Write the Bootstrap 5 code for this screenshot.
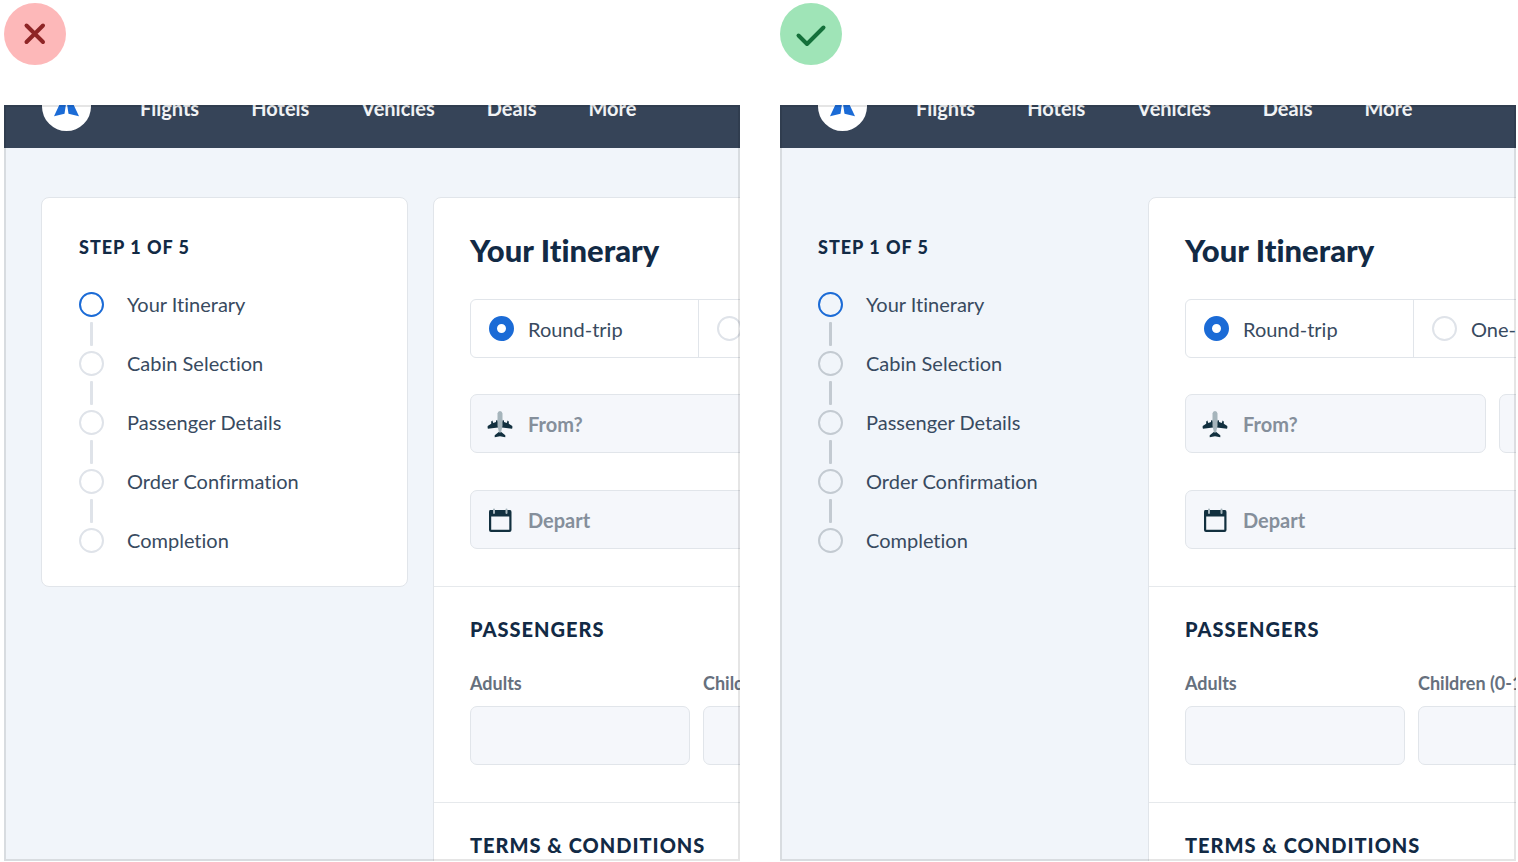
<!DOCTYPE html>
<html lang="en">
<head>
<meta charset="utf-8">
<meta name="viewport" content="width=device-width, initial-scale=1">
<title>Booking steps</title>
<link href="https://cdn.jsdelivr.net/npm/bootstrap@5.3.0/dist/css/bootstrap.min.css" rel="stylesheet">
<style>
  :root { --ink: #122a45; --ink-soft: #384a60; --line: #e1e5ea; --blue: #1b6bd6; --field: #f5f7fb; }
  body { font-family: Lato, "Open Sans", sans-serif; font-size: 20px; line-height: 24px; font-variant-ligatures: none; color: var(--ink-soft); background: #fff; }
  .compare { display: grid; grid-template-columns: 1fr 1fr; gap: 40px; height: 100vh; padding: 3px 2px 1px 4px; }
  .example { min-width: 0; min-height: 0; }
  .verdict { width: 62px; height: 62px; margin-bottom: 40px; }
  .verdict-bad { background: #fdb8b9; color: #8e2526; }
  .verdict-good { background: #9fe4b7; color: #14703a; }
  .screen { background: #f1f5fa; min-height: 0; }
  .screen::after { content: ""; position: absolute; inset: 0; border: 2px solid rgba(0, 0, 0, .1); pointer-events: none; }
  .topbar { height: 43px; padding: 0 38px 17px; background: #364458; }
  .topbar-row { gap: 49px; }
  .topbar-row ul { gap: 52px; padding-top: 2px; }
  .topbar a { color: #f1f3f5; font-weight: 700; }
  .workspace { padding: 49px 0 0 37px; }
  .steps { flex: 0 0 367px; padding: 37px 37px 33px; border: 1px solid transparent; }
  .steps-card { background: #fff; border-color: var(--line); border-radius: 8px; margin-right: 25px; --track: #dfe3e9; }
  .steps-plain { flex-basis: 331px; padding-left: 0; --track: #c3cad1; }
  .steps h2 { font-size: 18px; line-height: 24px; margin-bottom: 33px; letter-spacing: 1px; }
  .steps li { gap: 23px; }
  .marker { width: 25px; height: 25px; border: 2px solid var(--track); border-radius: 50%; }
  .marker-current { border-color: var(--blue); }
  .link-line { width: 3px; height: 24px; margin: 5px 0; background: var(--track); border-radius: 1px; }
  h1, h2 { color: var(--ink); font-weight: 900; }
  .panel { flex: 0 0 1000px; background: #fff; border: 1px solid var(--line); border-radius: 8px; }
  .panel h1 { font-size: 31px; line-height: 36px; margin-bottom: 31px; }
  .panel h2 { font-size: 20px; line-height: 26px; margin-bottom: 29px; letter-spacing: 1px; }
  .block { padding: 29px 36px 37px; border-bottom: 1px solid #e6e9ec; }
  .block-main { padding-top: 34px; }
  .choices { height: 59px; border: 1px solid var(--line); border-radius: 6px; margin-bottom: 36px; }
  .choices label { flex: 0 0 227px; gap: 14px; padding-left: 18px; }
  .choices label + label { border-left: 1px solid var(--line); }
  .choices input { appearance: none; width: 25px; height: 25px; margin: 0; border: 2px solid #dfe3e9; border-radius: 50%; background: #fff; }
  .choices input:checked { border: 8px solid var(--blue); }
  .field { height: 59px; background: var(--field); border: 1px solid var(--line); border-radius: 7px; }
  .field-icon { gap: 15px; padding-left: 16px; }
  .field-icon input { border: 0; background: none; padding: 0; outline: 0; min-width: 0; flex: 1; font-weight: 700; }
  .field-icon input::placeholder { color: #858f9b; }
  .trip { gap: 13px; margin-bottom: 37px; }
  .trip .field { flex: 0 0 301px; min-width: 0; }
  .people { gap: 13px; }
  .people > div { flex: 0 0 220px; }
  .people label { font-size: 18px; line-height: 24px; font-weight: 700; color: #66707d; margin-bottom: 11px; }
</style>
</head>
<body>
<svg class="d-none" aria-hidden="true">
  <symbol id="logo" viewBox="0 0 49 49">
    <path fill="#1b6bd6" d="M23.8 9 22 13 12 34.2 22.5 31.8 24 22ZM25.2 9 27 13 37 34.2 26.5 31.8 25 22Z"/>
  </symbol>
  <symbol id="plane" viewBox="0 0 26 28">
    <path fill="#12303f" d="M11 14V17.500L1 18.700Q.4 18 .7 16L4.200 13.800V11.500L5.400 10.500 6.200 13 9 12V10.800L10.200 9.800 11 12ZM15 14V17.500L25 18.700Q25.600 18 25.300 16L21.800 13.800V11.500L20.600 10.500 19.800 13 17 12V10.800L15.800 9.800 15 12ZM13 21 18.300 25.300V27.300L13 26.300 7.700 27.300V25.300Z"/>
    <path fill="#a6b5bc" d="M10.500 3.500Q10.800 1 13 1T15.500 3.500V16L14 22.500H12L10.500 16Z"/>
  </symbol>
  <symbol id="calendar" viewBox="0 0 26 26">
    <path fill="#12303f" fill-rule="evenodd" d="M3 3H23Q24.500 3 24.500 5V23Q24.500 25 22.500 25H4Q2 25 2 23V5Q2 3 3 3ZM4.200 9.500V22.700H22.300V9.500Z"/>
    <path stroke="#a6b5bc" stroke-width="2" stroke-linecap="round" d="M7 2.500V6M19.500 2.500V6"/>
  </symbol>
</svg>

<main class="compare">
  <section class="example d-flex flex-column" aria-label="Avoid">
    <div class="verdict verdict-bad rounded-circle d-flex align-items-center justify-content-center flex-shrink-0">
      <svg width="62" height="62" viewBox="0 0 62 62" fill="none" stroke="currentColor" stroke-width="4" stroke-linecap="round"><path d="M22.500 22.500 39 39M39 22.500 22.500 39"/></svg>
    </div>
    <div class="screen position-relative overflow-hidden flex-grow-1">
      <nav class="topbar d-flex align-items-end overflow-hidden">
        <div class="topbar-row d-flex align-items-center">
          <a class="d-flex bg-white rounded-circle" href="#" aria-label="Home"><svg width="49" height="49"><use href="#logo"/></svg></a>
          <ul class="list-unstyled d-flex m-0">
            <li><a class="text-decoration-none" href="#">Flights</a></li>
            <li><a class="text-decoration-none" href="#">Hotels</a></li>
            <li><a class="text-decoration-none" href="#">Vehicles</a></li>
            <li><a class="text-decoration-none" href="#">Deals</a></li>
            <li><a class="text-decoration-none" href="#">More</a></li>
          </ul>
        </div>
      </nav>
      <div class="workspace d-flex align-items-start">
        <aside class="steps steps-card">
          <h2>STEP 1 OF 5</h2>
          <ol class="list-unstyled m-0">
            <li class="d-flex"><div class="d-flex flex-column align-items-center"><span class="marker marker-current"></span><span class="link-line"></span></div>Your Itinerary</li>
            <li class="d-flex"><div class="d-flex flex-column align-items-center"><span class="marker"></span><span class="link-line"></span></div>Cabin Selection</li>
            <li class="d-flex"><div class="d-flex flex-column align-items-center"><span class="marker"></span><span class="link-line"></span></div>Passenger Details</li>
            <li class="d-flex"><div class="d-flex flex-column align-items-center"><span class="marker"></span><span class="link-line"></span></div>Order Confirmation</li>
            <li class="d-flex"><span class="marker"></span>Completion</li>
          </ol>
        </aside>
        <form class="panel">
          <div class="block block-main">
            <h1>Your Itinerary</h1>
            <div class="choices d-flex">
              <label class="d-flex align-items-center"><input type="radio" name="trip-a" checked>Round-trip</label>
              <label class="d-flex align-items-center"><input type="radio" name="trip-a">One-way</label>
            </div>
            <div class="trip d-flex">
              <label class="field field-icon d-flex align-items-center"><svg width="26" height="28"><use href="#plane"/></svg><input type="text" placeholder="From?" aria-label="From"></label>
              <label class="field field-icon d-flex align-items-center"><input type="text" aria-label="To"></label>
            </div>
            <label class="field field-icon d-flex align-items-center"><svg width="26" height="26"><use href="#calendar"/></svg><input type="text" placeholder="Depart" aria-label="Depart"></label>
          </div>
          <div class="block">
            <h2>PASSENGERS</h2>
            <div class="people d-flex">
              <div><label class="d-block" for="adults-a">Adults</label><input class="field w-100 d-block" id="adults-a" type="text"></div>
              <div><label class="d-block" for="children-a">Children (0-11)</label><input class="field w-100 d-block" id="children-a" type="text"></div>
            </div>
          </div>
          <div class="block"><h2>TERMS &amp; CONDITIONS</h2></div>
        </form>
      </div>
    </div>
  </section>

  <section class="example d-flex flex-column" aria-label="Prefer">
    <div class="verdict verdict-good rounded-circle d-flex align-items-center justify-content-center flex-shrink-0">
      <svg width="62" height="62" viewBox="0 0 62 62" fill="none" stroke="currentColor" stroke-width="4" stroke-linecap="round" stroke-linejoin="round"><path d="M18.500 33 27 41.500 43.500 25" transform="translate(0 -0.500)"/></svg>
    </div>
    <div class="screen position-relative overflow-hidden flex-grow-1">
      <nav class="topbar d-flex align-items-end overflow-hidden">
        <div class="topbar-row d-flex align-items-center">
          <a class="d-flex bg-white rounded-circle" href="#" aria-label="Home"><svg width="49" height="49"><use href="#logo"/></svg></a>
          <ul class="list-unstyled d-flex m-0">
            <li><a class="text-decoration-none" href="#">Flights</a></li>
            <li><a class="text-decoration-none" href="#">Hotels</a></li>
            <li><a class="text-decoration-none" href="#">Vehicles</a></li>
            <li><a class="text-decoration-none" href="#">Deals</a></li>
            <li><a class="text-decoration-none" href="#">More</a></li>
          </ul>
        </div>
      </nav>
      <div class="workspace d-flex align-items-start">
        <aside class="steps steps-plain">
          <h2>STEP 1 OF 5</h2>
          <ol class="list-unstyled m-0">
            <li class="d-flex"><div class="d-flex flex-column align-items-center"><span class="marker marker-current"></span><span class="link-line"></span></div>Your Itinerary</li>
            <li class="d-flex"><div class="d-flex flex-column align-items-center"><span class="marker"></span><span class="link-line"></span></div>Cabin Selection</li>
            <li class="d-flex"><div class="d-flex flex-column align-items-center"><span class="marker"></span><span class="link-line"></span></div>Passenger Details</li>
            <li class="d-flex"><div class="d-flex flex-column align-items-center"><span class="marker"></span><span class="link-line"></span></div>Order Confirmation</li>
            <li class="d-flex"><span class="marker"></span>Completion</li>
          </ol>
        </aside>
        <form class="panel">
          <div class="block block-main">
            <h1>Your Itinerary</h1>
            <div class="choices d-flex">
              <label class="d-flex align-items-center"><input type="radio" name="trip-b" checked>Round-trip</label>
              <label class="d-flex align-items-center"><input type="radio" name="trip-b">One-way</label>
            </div>
            <div class="trip d-flex">
              <label class="field field-icon d-flex align-items-center"><svg width="26" height="28"><use href="#plane"/></svg><input type="text" placeholder="From?" aria-label="From"></label>
              <label class="field field-icon d-flex align-items-center"><input type="text" aria-label="To"></label>
            </div>
            <label class="field field-icon d-flex align-items-center"><svg width="26" height="26"><use href="#calendar"/></svg><input type="text" placeholder="Depart" aria-label="Depart"></label>
          </div>
          <div class="block">
            <h2>PASSENGERS</h2>
            <div class="people d-flex">
              <div><label class="d-block" for="adults-b">Adults</label><input class="field w-100 d-block" id="adults-b" type="text"></div>
              <div><label class="d-block" for="children-b">Children (0-11)</label><input class="field w-100 d-block" id="children-b" type="text"></div>
            </div>
          </div>
          <div class="block"><h2>TERMS &amp; CONDITIONS</h2></div>
        </form>
      </div>
    </div>
  </section>
</main>
<script src="https://cdn.jsdelivr.net/npm/bootstrap@5.3.0/dist/js/bootstrap.bundle.min.js"></script>
</body>
</html>
